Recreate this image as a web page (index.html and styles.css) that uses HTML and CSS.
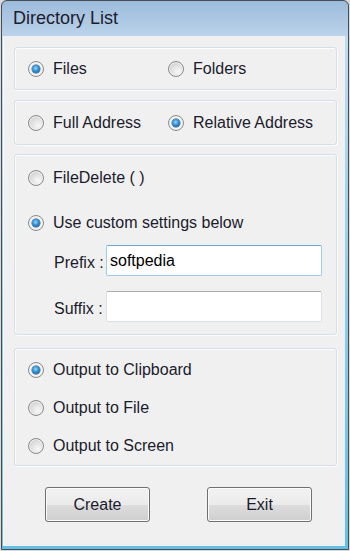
FILE: index.html
```html
<!DOCTYPE html>
<html>
<head>
<meta charset="utf-8">
<title>Directory List</title>
<link rel="stylesheet" href="styles.css">
</head>
<body>
<div class="window">
  <div class="titlebar">Directory List</div>
  <div class="client">
    <div class="group g1">
      <label class="opt"><span class="radio on"></span>Files</label>
      <label class="opt"><span class="radio"></span>Folders</label>
    </div>
    <div class="group g2">
      <label class="opt"><span class="radio"></span>Full Address</label>
      <label class="opt"><span class="radio on"></span>Relative Address</label>
    </div>
    <div class="group g3">
      <label class="opt row"><span class="radio"></span>FileDelete ( )</label>
      <label class="opt row"><span class="radio on"></span>Use custom settings below</label>
      <div class="field"><span class="flabel">Prefix :</span><div class="input focus">softpedia</div></div>
      <div class="field second"><span class="flabel">Suffix :</span><div class="input"></div></div>
    </div>
    <div class="group g4">
      <label class="opt row4"><span class="radio on"></span>Output to Clipboard</label>
      <label class="opt row4"><span class="radio"></span>Output to File</label>
      <label class="opt row4"><span class="radio"></span>Output to Screen</label>
    </div>
    <div class="buttons">
      <div class="btn">Create</div>
      <div class="btn">Exit</div>
    </div>
  </div>
</div>
</body>
</html>
```
FILE: styles.css
```css
html, body {
  margin: 0;
  background: #d9d9d9;
}
body {
  width: 350px;
  height: 551px;
  font-family: "Liberation Sans", Arial, sans-serif;
  font-size: 16px;
  color: #1b1b2c;
}
.window {
  position: relative;
  margin-left: 1px;
  width: 348px;
  height: 550px;
  box-sizing: border-box;
  border: 1px solid #474c55;
  border-radius: 6px 6px 0 0;
  background: linear-gradient(#9cbbdb 0, #bcd3eb 35px, #bcdcf0 36px, #62c0e6 100%);
  display: flex;
  flex-direction: column;
  overflow: hidden;
}
.titlebar {
  height: 35px;
  flex: none;
  display: flex;
  align-items: center;
  padding-left: 11px;
  font-size: 18px;
  color: #1c1c2e;
}
.client {
  flex: 1;
  margin: 0 3px 3px 1px;
  background: #f0f0f0;
  box-shadow: inset 1px 0 0 #fafafa;
  padding: 11px 8px 0 11px;
  display: flex;
  flex-direction: column;
}
.group {
  box-sizing: border-box;
  border: 1px solid #d5dfe5;
  border-radius: 3px;
  box-shadow: inset 1px 1px 0 #fcfcfc, 1px 1px 0 #fcfcfc;
  padding-left: 13px;
}
.g1, .g2 {
  display: grid;
  grid-template-columns: 140px 1fr;
  align-items: center;
}
.g1 { height: 43px; }
.g2 { height: 45px; margin-top: 10px; }
.g3 { margin-top: 9px; padding-bottom: 12px; }
.g4 { margin-top: 13px; padding-top: 2px; }
.opt {
  display: flex;
  align-items: center;
  gap: 9px;
  white-space: nowrap;
}
.row { height: 45px; }
.row4 { height: 38px; }
.radio {
  position: relative;
  flex: none;
  width: 16px;
  height: 16px;
  box-sizing: border-box;
  border-radius: 50%;
  border: 1px solid #8a8b8c;
  background: radial-gradient(circle at 65% 70%, #f8f8f8 0, #e2e2e2 45%, #c4c4c4 100%);
  box-shadow: inset 0 0 0 1px #f0f0f0;
}
.radio.on {
  background: #f4f4f4;
}
.radio.on::after {
  content: "";
  position: absolute;
  left: 3px;
  top: 3px;
  width: 8px;
  height: 8px;
  border-radius: 50%;
  background: radial-gradient(circle at 45% 40%, #9bdaff 0, #2d8ed2 45%, #0d4f8e 100%);
  box-shadow: 0 0 0 0.5px #2a4f7a;
}
.field {
  display: flex;
  align-items: center;
  padding-left: 26px;
  height: 31px;
}
.field.second { margin-top: 15px; }
.flabel {
  width: 52px;
  flex: none;
  padding-top: 4px;
}
.input {
  width: 216px;
  height: 31px;
  box-sizing: border-box;
  background: #fff;
  border: 1px solid #dbdfe6;
  border-top-color: #abadb3;
  border-radius: 2px;
  padding: 0 3px;
  display: flex;
  align-items: center;
  color: #000;
}
.input.focus {
  border-color: #a5c9e8;
  border-top-color: #6ea6d8;
}
.buttons {
  display: flex;
  gap: 57px;
  padding-left: 31px;
  margin-top: 21px;
}
.btn {
  width: 105px;
  height: 35px;
  box-sizing: border-box;
  border: 1px solid #707070;
  border-radius: 3px;
  background: linear-gradient(#f2f2f2 0, #ebebeb 50%, #dddddd 50%, #cfcfcf 100%);
  box-shadow: inset 0 0 0 1px #fbfbfb;
  display: flex;
  align-items: center;
  justify-content: center;
  color: #1b1b2c;
}
```
